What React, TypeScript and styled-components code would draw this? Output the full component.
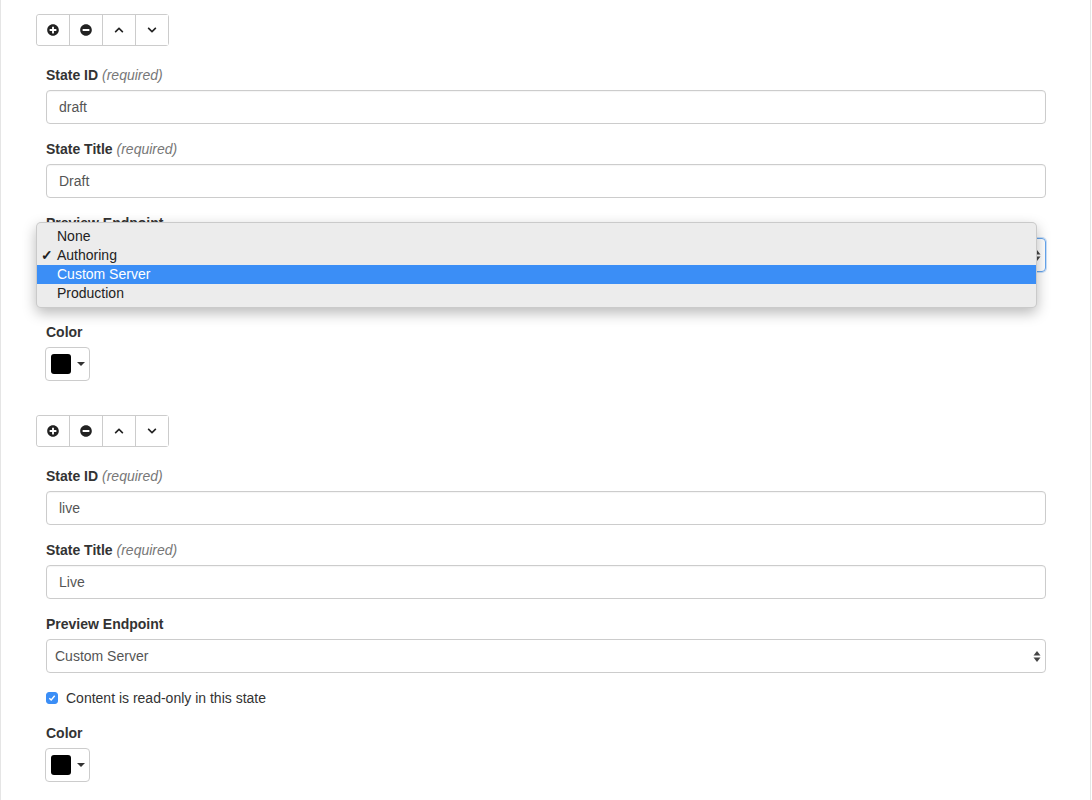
import { createGlobalStyle, styled } from "styled-components";
import { FaPlusCircle, FaMinusCircle, FaChevronUp, FaChevronDown } from "react-icons/fa";

const GlobalStyle = createGlobalStyle`
    html, body {
        margin: 0;
        padding: 0;
        background: #fff;
    }
    body {
        font-family: "Liberation Sans", Arial, sans-serif;
        font-size: 14px;
        line-height: 20px;
        color: #333;
    }
`;

const Panel = styled.div`
    width: 1091px;
    min-height: 800px;
    box-sizing: border-box;
    border-left: 1px solid #e5e5e5;
    border-right: 1px solid #e5e5e5;
    padding: 14px 0 0 35px;
`;

const Block = styled.div`
    margin-bottom: 34px;
`;

const BtnGroup = styled.div`
    display: inline-flex;
    border: 1px solid #ccc;
    border-radius: 3px;
    margin-bottom: 19px;
    vertical-align: top;
`;

const IconBtn = styled.button`
    width: 33px;
    height: 30px;
    display: flex;
    align-items: center;
    justify-content: center;
    background: #fff;
    border: none;
    border-left: 1px solid #ccc;
    padding: 0;
    color: #222;
    &:first-child {
        width: 32px;
        border-left: none;
        border-radius: 3px 0 0 3px;
    }
`;

const Fields = styled.div`
    margin-left: 10px;
    width: 1000px;
`;

const FormGroup = styled.div`
    position: relative;
    margin-bottom: 15px;
`;

const Label = styled.label`
    display: block;
    font-weight: 700;
    margin-bottom: 5px;
    color: #333;
`;

const Hint = styled.span`
    font-weight: 400;
    font-style: italic;
    color: #777;
`;

const Input = styled.input`
    display: block;
    width: 100%;
    height: 34px;
    box-sizing: border-box;
    padding: 6px 12px;
    border: 1px solid #ccc;
    border-radius: 4px;
    font-family: inherit;
    font-size: 14px;
    color: #555;
    box-shadow: inset 0 1px 1px rgba(0, 0, 0, 0.04);
    outline: none;
`;

const SelectBox = styled.div<{ $focused?: boolean }>`
    display: flex;
    align-items: center;
    justify-content: space-between;
    height: 34px;
    box-sizing: border-box;
    padding: 0 4px 0 8px;
    border: 1px solid ${(p) => (p.$focused ? "#66a6ee" : "#ccc")};
    border-radius: 4px;
    color: #555;
    box-shadow: ${(p) => (p.$focused ? "0 0 0 1px rgba(102, 166, 238, 0.35)" : "none")};
`;

const Menu = styled.div`
    position: absolute;
    left: -10px;
    top: 9px;
    width: 1001px;
    box-sizing: border-box;
    padding: 4px 0;
    background: #ececec;
    border: 1px solid rgba(0, 0, 0, 0.14);
    border-radius: 5px;
    box-shadow: 0 5px 14px rgba(0, 0, 0, 0.28);
    z-index: 10;
`;

const MenuItem = styled.div<{ $active?: boolean }>`
    position: relative;
    height: 19px;
    line-height: 19px;
    padding-left: 20px;
    color: ${(p) => (p.$active ? "#fff" : "#222")};
    background: ${(p) => (p.$active ? "#3b8ef6" : "transparent")};
`;

const Check = styled.span`
    position: absolute;
    left: 4px;
    top: 0;
    font-size: 14px;
    font-weight: 700;
`;

const CheckRow = styled.label`
    display: flex;
    align-items: center;
    gap: 8px;
    margin: 0 0 15px 0;
    height: 20px;
    color: #333;
`;

const CheckBox = styled.span<{ $checked?: boolean }>`
    width: 12px;
    height: 12px;
    box-sizing: border-box;
    border-radius: 3px;
    display: flex;
    align-items: center;
    justify-content: center;
    background: ${(p) => (p.$checked ? "#3b8ef6" : "#fff")};
    border: 1px solid ${(p) => (p.$checked ? "#3b8ef6" : "#aaa")};
`;

const ColorBtn = styled.button`
    display: flex;
    align-items: center;
    gap: 6px;
    height: 34px;
    width: 45px;
    box-sizing: border-box;
    margin-left: -1px;
    padding: 0 0 0 5px;
    background: #fff;
    border: 1px solid #ccc;
    border-radius: 4px;
`;

const Swatch = styled.span<{ $color: string }>`
    width: 20px;
    height: 20px;
    border-radius: 3px;
    background: ${(p) => p.$color};
`;

const Caret = styled.span`
    width: 0;
    height: 0;
    border-left: 4px solid transparent;
    border-right: 4px solid transparent;
    border-top: 4px solid #333;
`;

function UpDown() {
    return (
        <svg width="8" height="13" viewBox="0 0 8 13">
            <path d="M4 1 L7.5 5.5 H0.5 Z" fill="#444" />
            <path d="M4 12 L7.5 7.5 H0.5 Z" fill="#444" />
        </svg>
    );
}

type StateDef = {
    id: string;
    title: string;
    endpoint: string;
    readOnly: boolean;
    open?: boolean;
};

const states: StateDef[] = [
    { id: "draft", title: "Draft", endpoint: "Authoring", readOnly: false, open: true },
    { id: "live", title: "Live", endpoint: "Custom Server", readOnly: true },
];

const options = ["None", "Authoring", "Custom Server", "Production"];

function StateBlock({ s }: { s: StateDef }) {
    return (
        <Block>
            <BtnGroup>
                <IconBtn><FaPlusCircle size={12} /></IconBtn>
                <IconBtn><FaMinusCircle size={12} /></IconBtn>
                <IconBtn><FaChevronUp size={10} /></IconBtn>
                <IconBtn><FaChevronDown size={10} /></IconBtn>
            </BtnGroup>
            <Fields>
                <FormGroup>
                    <Label>State ID <Hint>(required)</Hint></Label>
                    <Input defaultValue={s.id} />
                </FormGroup>
                <FormGroup>
                    <Label>State Title <Hint>(required)</Hint></Label>
                    <Input defaultValue={s.title} />
                </FormGroup>
                <FormGroup>
                    <Label>Preview Endpoint</Label>
                    <SelectBox $focused={s.open}>
                        <span>{s.endpoint}</span>
                        <UpDown />
                    </SelectBox>
                    {s.open ? (
                        <Menu>
                            {options.map((o) => (
                                <MenuItem key={o} $active={o === "Custom Server"}>
                                    {o === s.endpoint ? <Check>✓</Check> : null}
                                    {o}
                                </MenuItem>
                            ))}
                        </Menu>
                    ) : null}
                </FormGroup>
                <CheckRow>
                    <CheckBox $checked={s.readOnly}>
                        {s.readOnly ? (
                            <svg width="8" height="8" viewBox="0 0 8 8">
                                <path d="M1.3 4.2 L3.2 6 L6.7 1.8" stroke="#fff" strokeWidth="1.4" fill="none" />
                            </svg>
                        ) : null}
                    </CheckBox>
                    Content is read-only in this state
                </CheckRow>
                <FormGroup>
                    <Label>Color</Label>
                    <ColorBtn>
                        <Swatch $color="#000" />
                        <Caret />
                    </ColorBtn>
                </FormGroup>
            </Fields>
        </Block>
    );
}

export default function App() {
    return (
        <>
            <GlobalStyle />
            <Panel>
                {states.map((s) => (
                    <StateBlock key={s.id} s={s} />
                ))}
            </Panel>
        </>
    );
}
